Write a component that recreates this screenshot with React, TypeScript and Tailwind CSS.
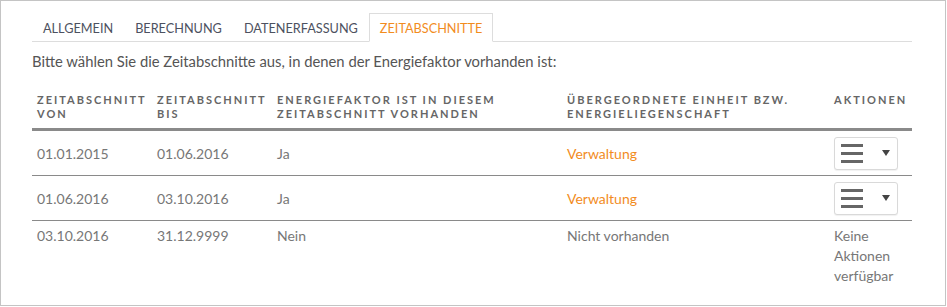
import React from 'react';

interface Row {
  von: string;
  bis: string;
  vorhanden: string;
  einheit: string;
  link: boolean;
  actions: boolean;
}

const rows: Row[] = [
  { von: '01.01.2015', bis: '01.06.2016', vorhanden: 'Ja', einheit: 'Verwaltung', link: true, actions: true },
  { von: '01.06.2016', bis: '03.10.2016', vorhanden: 'Ja', einheit: 'Verwaltung', link: true, actions: true },
  { von: '03.10.2016', bis: '31.12.9999', vorhanden: 'Nein', einheit: 'Nicht vorhanden', link: false, actions: false },
];

const tabs = ['Allgemein', 'Berechnung', 'Datenerfassung', 'Zeitabschnitte'];

const grid = 'grid grid-cols-[120px_120px_290px_267px_82px]';

const ActionButton = () => (
  <button className="flex h-[33px] w-[64px] items-center justify-between rounded-[3px] border border-[#d9d9d9] bg-white pl-[6px] pr-[6px] shadow-[0_1px_1px_rgba(0,0,0,0.06)]">
    <span className="flex flex-col gap-[5px]">
      <span className="block h-[3px] w-[22px] bg-[#666]"></span>
      <span className="block h-[3px] w-[22px] bg-[#666]"></span>
      <span className="block h-[3px] w-[22px] bg-[#666]"></span>
    </span>
    <svg width="8" height="6" viewBox="0 0 8 6" className="mr-[1px]">
      <path d="M0 0 L8 0 L4 6 Z" fill="#444" />
    </svg>
  </button>
);

export default function App() {
  return (
    <div className="h-[307px] w-[947px] bg-white font-['Lato',sans-serif]">
      <div className="h-[306px] w-[946px] border border-[#c4c4c4] pl-[31px] pt-[12px]">
        <div className="flex w-[880px] border-b border-[#dddddd]">
          {tabs.map((t, i) => {
            const active = i === tabs.length - 1;
            return (
              <div
                key={t}
                className={
                  active
                    ? '-mb-px h-[29px] border border-b-white border-[#dddddd] bg-white px-[10px] pt-[5px] text-[12.7px] uppercase text-[#f28c1e]'
                    : 'h-[28px] border border-transparent px-[10px] pt-[5px] text-[12.7px] uppercase text-[#4d5160]'
                }
              >
                {t}
              </div>
            );
          })}
        </div>

        <p className="mt-[8px] text-[14.8px] text-[#555]">
          Bitte wählen Sie die Zeitabschnitte aus, in denen der Energiefaktor vorhanden ist:
        </p>

        <div className="mt-[21px] w-[880px]">
          <div className={`${grid} border-b-[3px] border-[#8a8a8a] pb-[7px] text-[11px] font-bold uppercase leading-[14px] tracking-[2px] text-[#666]`}>
            <div className="px-[5px]">Zeitabschnitt von</div>
            <div className="px-[5px]">Zeitabschnitt bis</div>
            <div className="px-[5px]">Energiefaktor ist in diesem Zeitabschnitt vorhanden</div>
            <div className="px-[5px] pr-[30px]">Übergeordnete Einheit bzw. Energieliegenschaft</div>
            <div className="px-[5px]">Aktionen</div>
          </div>

          {rows.map((r, i) => (
            <div
              key={i}
              className={
                r.actions
                  ? `${grid} h-[45px] items-center border-b border-[#8a8a8a] text-[14px] text-[#777]`
                  : `${grid} pt-[5px] text-[14px] leading-[20px] text-[#777]`
              }
            >
              <div className="px-[5px]">{r.von}</div>
              <div className="px-[5px]">{r.bis}</div>
              <div className="px-[5px]">{r.vorhanden}</div>
              <div className={r.link ? 'px-[5px] text-[#f28c1e]' : 'px-[5px]'}>{r.einheit}</div>
              <div className="px-[5px]">
                {r.actions ? <ActionButton /> : <span className="block">Keine Aktionen verfügbar</span>}
              </div>
            </div>
          ))}
        </div>
      </div>
    </div>
  );
}
